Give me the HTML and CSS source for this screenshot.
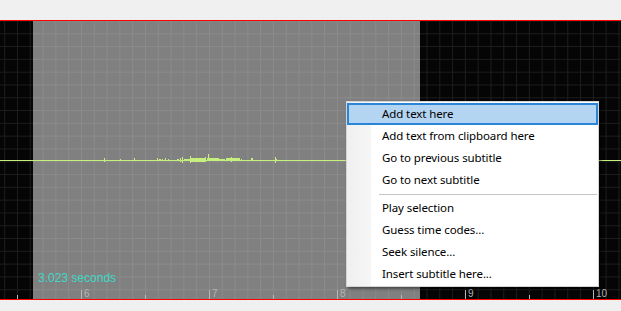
FILE: index.html
```html
<!DOCTYPE html>
<html>
<head>
<meta charset="utf-8">
<link rel="stylesheet" href="styles.css">
</head>
<body>
<div class="top"></div>
<div class="panel">
  <div class="selection"></div>
  <svg class="wave" width="621" height="278" viewBox="0 0 621 278">
    <g fill="#c6f07e">
      <rect x="0" y="139" width="621" height="1"/>
      <rect x="104" y="137" width="1" height="4"/>
      <rect x="120" y="138" width="1" height="2"/>
      <rect x="134" y="137" width="1" height="3"/>
      <rect x="157" y="137" width="1" height="3"/>
      <rect x="159" y="138" width="2" height="2"/>
      <rect x="162" y="138" width="1" height="2"/>
      <rect x="165" y="137" width="1" height="3"/>
      <rect x="168" y="138" width="1" height="2"/>
      <rect x="177" y="138" width="2" height="2"/>
      <rect x="180" y="137" width="1" height="4"/>
      <rect x="182" y="136" width="1" height="6"/>
      <rect x="184" y="138" width="6" height="2"/>
      <rect x="190" y="135" width="1" height="7"/>
      <rect x="191" y="137" width="14" height="4"/>
      <rect x="205" y="136" width="1" height="5"/>
      <rect x="207" y="137" width="12" height="3"/>
      <rect x="208" y="133" width="1" height="6"/>
      <rect x="219" y="138" width="6" height="2"/>
      <rect x="226" y="137" width="14" height="3"/>
      <rect x="231" y="136" width="1" height="5"/>
      <rect x="241" y="138" width="1" height="2"/>
      <rect x="251" y="137" width="2" height="3"/>
      <rect x="275" y="136" width="1" height="6"/>
      <rect x="276" y="138" width="1" height="2"/>
    </g>
  </svg>
  <div class="seconds">3.023 seconds</div>
  <div class="ruler">
    <span class="tick minor" style="left:17px"></span>
    <span class="tick major" style="left:81px"></span><span class="lbl" style="left:84px">6</span>
    <span class="tick minor" style="left:145px"></span>
    <span class="tick major" style="left:209px"></span><span class="lbl" style="left:212px">7</span>
    <span class="tick minor" style="left:273px"></span>
    <span class="tick major" style="left:337px"></span><span class="lbl" style="left:340px">8</span>
    <span class="tick minor" style="left:401px"></span>
    <span class="tick major" style="left:465px"></span><span class="lbl" style="left:468px">9</span>
    <span class="tick minor" style="left:529px"></span>
    <span class="tick major" style="left:593px"></span><span class="lbl" style="left:596px">10</span>
  </div>
  <div class="menu">
    <div class="item active">Add text here</div>
    <div class="item">Add text from clipboard here</div>
    <div class="item">Go to previous subtitle</div>
    <div class="item">Go to next subtitle</div>
    <div class="sep"></div>
    <div class="item">Play selection</div>
    <div class="item">Guess time codes...</div>
    <div class="item">Seek silence...</div>
    <div class="item">Insert subtitle here...</div>
  </div>
</div>
<div class="bottom"></div>
</body>
</html>
```

FILE: styles.css
```css
html, body {
  margin: 0;
  padding: 0;
  background: #f0f0f0;
  width: 621px;
  height: 311px;
  overflow: hidden;
}
.top {
  height: 20px;
}
.panel {
  position: relative;
  height: 278px;
  border-top: 1px solid #ff0000;
  border-bottom: 1px solid #ff0000;
  background-color: #050505;
  background-image:
    linear-gradient(to right, #1d1d1d 1px, transparent 1px),
    linear-gradient(to bottom, #1d1d1d 1px, transparent 1px);
  background-size: 12.8px 12.8px;
  background-position: 4.2px 12.3px;
  overflow: hidden;
}
.selection {
  position: absolute;
  left: 33px;
  top: 0;
  width: 387px;
  height: 100%;
  background-color: #808080;
  background-image:
    linear-gradient(to right, #8b8b8b 1px, transparent 1px),
    linear-gradient(to bottom, #8b8b8b 1px, transparent 1px);
  background-size: 12.8px 12.8px;
  background-position: 9.6px 12.3px;
}
.wave {
  position: absolute;
  left: 0;
  top: 0;
}
.seconds {
  position: absolute;
  left: 38px;
  top: 250px;
  font-family: "Liberation Sans", Arial, sans-serif;
  font-size: 12px;
  color: #3fd8c6;
}
.ruler {
  position: absolute;
  left: 0;
  bottom: 0;
  width: 100%;
  height: 12px;
}
.tick {
  position: absolute;
  bottom: 0;
  width: 1px;
  background: #b8b8b8;
}
.tick.major { height: 9px; }
.tick.minor { height: 4px; }
.lbl {
  position: absolute;
  bottom: 0;
  font-family: "Liberation Sans", Arial, sans-serif;
  font-size: 10px;
  line-height: 11px;
  color: #b4b4b4;
}
.menu {
  position: absolute;
  left: 346px;
  top: 80px;
  width: 251px;
  padding: 1px 0;
  border: 1px solid #d4d4d4;
  background: linear-gradient(to right, #efefef 0, #f6f6f6 24px, #ffffff 24px);
  box-shadow: 2px 2px 3px rgba(0, 0, 0, 0.45);
  font-family: "Noto Sans", "Open Sans", sans-serif;
  font-size: 11.5px;
  letter-spacing: -0.1px;
  color: #000;
}
.item {
  height: 22px;
  line-height: 22px;
  padding-left: 35px;
  box-sizing: border-box;
  white-space: nowrap;
}
.item.active {
  background: #b4d5f2;
  box-shadow: inset 0 0 0 2px #2a84d8;
}
.sep {
  height: 1px;
  margin: 3px 1px 2px 32px;
  background: #c4c4c4;
}
.bottom {
  height: 11px;
}
```
